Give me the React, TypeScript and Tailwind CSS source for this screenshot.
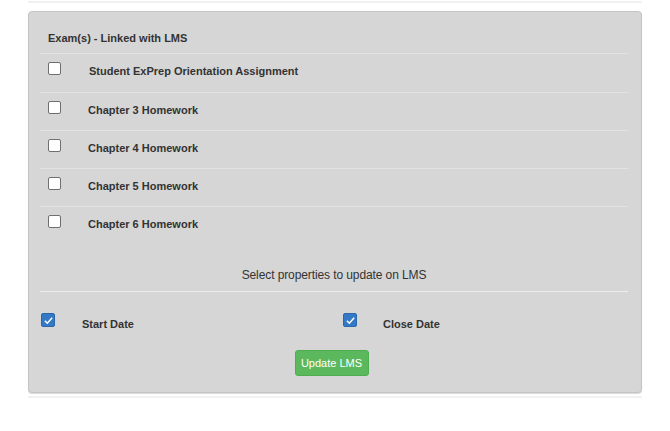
import React from "react";

const exams = [
  { name: "Student ExPrep Orientation Assignment", pad: "pl-[28px]", h: "h-[39px]" },
  { name: "Chapter 3 Homework", pad: "pl-[27px]", h: "h-[38px]" },
  { name: "Chapter 4 Homework", pad: "pl-[27px]", h: "h-[38px]" },
  { name: "Chapter 5 Homework", pad: "pl-[27px]", h: "h-[38px]" },
  { name: "Chapter 6 Homework", pad: "pl-[27px]", h: "h-[38px]" },
];

const Box = ({ checked }: { checked?: boolean }) =>
  checked ? (
    <span className="flex h-[14px] w-[14px] items-center justify-center rounded-[2px] bg-[#3479c6] border border-[#2a67ab]">
      <svg viewBox="0 0 12 12" className="h-[11px] w-[11px]">
        <path d="M2 6.3 L4.7 9 L10 3" fill="none" stroke="white" strokeWidth="1.6" />
      </svg>
    </span>
  ) : (
    <span className="block h-[13px] w-[13px] rounded-[2px] border border-[#6f6f6f] bg-white" />
  );

const App = () => {
  return (
    <div className="w-[670px] h-[431px] bg-white pt-px font-['Liberation_Sans',Arial,sans-serif] text-[#333]">
      <div className="mx-[28px] h-[2px] bg-[#f1f1f1]" />

      {/* panel */}
      <div className="mx-[28px] mt-[8px] h-[382px] rounded-[4px] border border-[#c4c4c4] bg-[#d6d6d6] shadow-[0_1px_1px_rgba(0,0,0,0.15)] pl-[11px] pr-[13px] pt-[20px]">
        <div className="pl-[8px] text-[11px] font-bold leading-[13px] h-[21px]">Exam(s) - Linked with LMS</div>

        {exams.map((e) => (
          <div key={e.name} className={`${e.h} border-t border-[#e2e2e2] flex pl-[8px] pt-[8px]`}>
            <Box />
            <span className={`${e.pad} pt-[3px] text-[11px] font-bold leading-[13px]`}>{e.name}</span>
          </div>
        ))}

        <div className="pt-[24px] pb-[9px] text-center text-[12px] leading-[14px] tracking-[-0.1px]">Select properties to update on LMS</div>
        <div className="border-t border-[#ececec]" />

        <div className="flex pt-[21px] pl-[1px]">
          <div className="w-[302px] flex">
            <Box checked />
            <span className="pl-[27px] pt-[5px] text-[11px] font-bold leading-[13px]">Start Date</span>
          </div>
          <div className="flex">
            <Box checked />
            <span className="pl-[26px] pt-[5px] text-[11px] font-bold leading-[13px]">Close Date</span>
          </div>
        </div>

        <div className="flex justify-center pt-[19px] pr-[5px]">
          <button className="h-[26px] w-[74px] rounded-[3px] bg-[#5cb85c] border border-[#4cae4c] text-white text-[11px] leading-[13px]">
            Update LMS
          </button>
        </div>
      </div>

      <div className="mx-[28px] mt-[3px] h-[2px] bg-[#f1f1f1]" />
    </div>
  );
};

export default App;
